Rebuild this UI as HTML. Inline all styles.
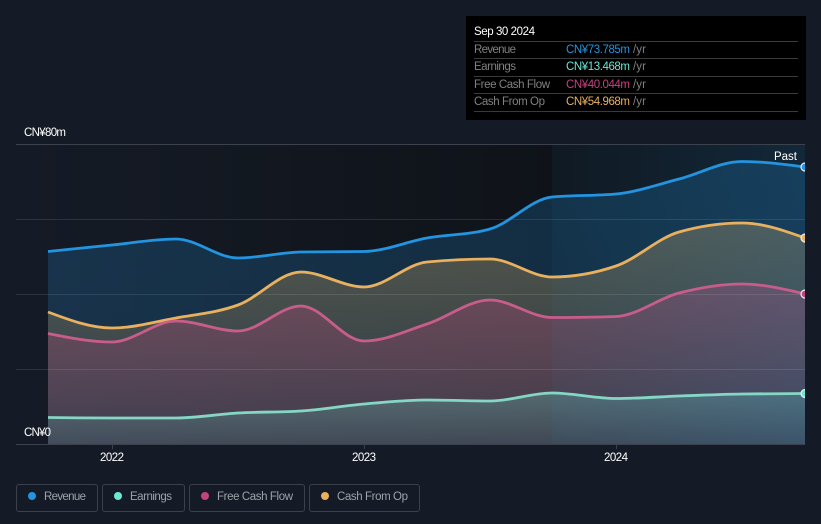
<!DOCTYPE html>
<html>
<head>
<meta charset="utf-8">
<style>
html,body{margin:0;padding:0;background:#151b26;width:821px;height:524px;overflow:hidden}
svg{display:block}
text{font-family:"Liberation Sans","Noto Sans CJK SC",sans-serif;font-size:11.5px}
</style>
</head>
<body>
<svg id="c" width="821" height="524" viewBox="0 0 821 524" xmlns="http://www.w3.org/2000/svg">
<defs>
<linearGradient id="bg" x1="0" y1="0" x2="1" y2="0">
<stop offset="0" stop-color="#151b26"/><stop offset="1" stop-color="#0f1319"/>
</linearGradient>
<linearGradient id="hl" x1="0" y1="0" x2="1" y2="0">
<stop offset="0" stop-color="#2394df" stop-opacity=".05"/><stop offset="1" stop-color="#2394df" stop-opacity=".16"/>
</linearGradient>
<linearGradient id="fr" x1="0" y1="0" x2="0" y2="1">
<stop offset="0" stop-color="#2394df" stop-opacity=".22"/><stop offset="1" stop-color="#2394df" stop-opacity=".18"/>
</linearGradient>
<linearGradient id="fo" x1="0" y1="0" x2="0" y2="1">
<stop offset="0" stop-color="#e9b15f" stop-opacity=".3"/><stop offset="1" stop-color="#e9b15f" stop-opacity=".1"/>
</linearGradient>
<linearGradient id="ff" x1="0" y1="0" x2="0" y2="1">
<stop offset="0" stop-color="#c3427f" stop-opacity=".3"/><stop offset="1" stop-color="#c3427f" stop-opacity=".12"/>
</linearGradient>
<linearGradient id="fe" x1="0" y1="0" x2="0" y2="1">
<stop offset="0" stop-color="#6de6d3" stop-opacity=".25"/><stop offset="1" stop-color="#6de6d3" stop-opacity=".08"/>
</linearGradient>
<clipPath id="cp"><rect x="16" y="144" width="789" height="301"/></clipPath>
</defs>

<rect width="821" height="524" fill="#151b26"/>
<rect x="16" y="144" width="536" height="301" fill="url(#bg)"/>
<rect x="552" y="144" width="253" height="301" fill="#0f1319"/>

<g id="areas"></g>

<rect x="552" y="144" width="253" height="301" fill="url(#hl)"/>

<g stroke="#ffffff" stroke-opacity=".1" stroke-width="1">
<line x1="16" x2="805" y1="219.5" y2="219.5"/>
<line x1="16" x2="805" y1="294.5" y2="294.5"/>
<line x1="16" x2="805" y1="369.5" y2="369.5"/>
</g>
<line x1="16" x2="805" y1="144.5" y2="144.5" stroke="#3b424d"/>
<line x1="16" x2="805" y1="444.5" y2="444.5" stroke="#3b424d"/>
<g stroke="#3b424d">
<line x1="112.5" x2="112.5" y1="445" y2="449"/>
<line x1="364.5" x2="364.5" y1="445" y2="449"/>
<line x1="616.5" x2="616.5" y1="445" y2="449"/>
</g>

<g id="lines" clip-path="url(#cp)" fill="none" stroke-width="2.8" stroke-linejoin="round"></g>

<g clip-path="url(#cp)" stroke="#e8f0f5" stroke-width="1.2">
<circle cx="805" cy="167" r="4" fill="#2394df"/>
<circle cx="805" cy="238" r="4" fill="#e9b15f"/>
<circle cx="805" cy="294" r="4" fill="#c3427f"/>
<circle cx="805" cy="393.5" r="4" fill="#6de6d3"/>
</g>

<g fill="#ffffff">
<text x="24" y="136" textLength="42" lengthAdjust="spacing">CN¥80m</text>
<text x="24" y="436" textLength="27" lengthAdjust="spacing">CN¥0</text>
<text x="774" y="160" textLength="23" lengthAdjust="spacing">Past</text>
<text x="100" y="461" textLength="24" lengthAdjust="spacing">2022</text>
<text x="352" y="461" textLength="24" lengthAdjust="spacing">2023</text>
<text x="604" y="461" textLength="24" lengthAdjust="spacing">2024</text>
</g>

<rect x="466" y="16" width="340" height="104" fill="#000"/>
<text x="474" y="35" fill="#ffffff" textLength="61" lengthAdjust="spacing">Sep 30 2024</text>
<g stroke="#3a3a3a">
<line x1="474" x2="798" y1="41.5" y2="41.5"/>
<line x1="474" x2="798" y1="58.5" y2="58.5"/>
<line x1="474" x2="798" y1="76.5" y2="76.5"/>
<line x1="474" x2="798" y1="93.5" y2="93.5"/>
<line x1="474" x2="798" y1="111.5" y2="111.5"/>
</g>
<g fill="#808080">
<text x="474" y="53" textLength="42" lengthAdjust="spacing">Revenue</text>
<text x="474" y="70" textLength="42" lengthAdjust="spacing">Earnings</text>
<text x="474" y="88" textLength="76" lengthAdjust="spacing">Free Cash Flow</text>
<text x="474" y="105" textLength="71" lengthAdjust="spacing">Cash From Op</text>
<text x="633" y="53" textLength="13" lengthAdjust="spacing">/yr</text>
<text x="633" y="70" textLength="13" lengthAdjust="spacing">/yr</text>
<text x="633" y="88" textLength="13" lengthAdjust="spacing">/yr</text>
<text x="633" y="105" textLength="13" lengthAdjust="spacing">/yr</text>
</g>
<text x="566" y="53" fill="#2394df" textLength="64" lengthAdjust="spacing">CN¥73.785m</text>
<text x="566" y="70" fill="#6de6d3" textLength="64" lengthAdjust="spacing">CN¥13.468m</text>
<text x="566" y="88" fill="#c3427f" textLength="64" lengthAdjust="spacing">CN¥40.044m</text>
<text x="566" y="105" fill="#e9b15f" textLength="64" lengthAdjust="spacing">CN¥54.968m</text>

<g fill="none" stroke="#3b404b">
<rect x="16.5" y="484.5" width="81" height="27" rx="2.5"/>
<rect x="102.5" y="484.5" width="82" height="27" rx="2.5"/>
<rect x="189.5" y="484.5" width="115" height="27" rx="2.5"/>
<rect x="309.5" y="484.5" width="110" height="27" rx="2.5"/>
</g>
<circle cx="32" cy="496" r="4" fill="#2394df"/>
<circle cx="118" cy="496" r="4" fill="#6de6d3"/>
<circle cx="205" cy="496" r="4" fill="#c3427f"/>
<circle cx="325" cy="496" r="4" fill="#e9b15f"/>
<g fill="#9ea2a9">
<text x="44" y="500" textLength="42" lengthAdjust="spacing">Revenue</text>
<text x="130" y="500" textLength="42" lengthAdjust="spacing">Earnings</text>
<text x="217" y="500" textLength="76" lengthAdjust="spacing">Free Cash Flow</text>
<text x="337" y="500" textLength="71" lengthAdjust="spacing">Cash From Op</text>
</g>
</svg>
<script>
var X=[48,112,176,238,301,364,427,490,552,616,679,742,805];
var S=[
{c:"#2394df",f:"fr",y:[251.5,245,239,258,252,251.5,238,229,197,194,179,161.5,167]},
{c:"#e9b15f",f:"fo",y:[312,328,318,305,272,287,262,259,277,266,232,223,238]},
{c:"#c85c8a",f:"ff",y:[333.5,342,321,331,306,341,324,300,317.5,316.5,293,284,294]},
{c:"#85d6c4",f:"fe",y:[417.5,418,418,413,411,404,400,401,393,398.5,396,394,393.5]}
];
function sgn(v){return v<0?-1:1}
function path(y){
  var n=X.length,t=[],s=[],i;
  for(i=0;i<n-1;i++)s[i]=(y[i+1]-y[i])/(X[i+1]-X[i]);
  for(i=1;i<n-1;i++){
    var h0=X[i]-X[i-1],h1=X[i+1]-X[i],p=(s[i-1]*h1+s[i]*h0)/(h0+h1);
    t[i]=(sgn(s[i-1])+sgn(s[i]))*Math.min(Math.abs(s[i-1]),Math.abs(s[i]),.5*Math.abs(p));
  }
  t[0]=(3*s[0]-t[1])/2;t[n-1]=(3*s[n-2]-t[n-2])/2;
  var d="M"+X[0]+" "+y[0];
  for(i=0;i<n-1;i++){
    var dx=(X[i+1]-X[i])/3;
    d+="C"+(X[i]+dx).toFixed(1)+" "+(y[i]+dx*t[i]).toFixed(1)+" "+(X[i+1]-dx).toFixed(1)+" "+(y[i+1]-dx*t[i+1]).toFixed(1)+" "+X[i+1]+" "+y[i+1];
  }
  return d;
}
var NS="http://www.w3.org/2000/svg",A=document.getElementById("areas"),L=document.getElementById("lines");
S.forEach(function(s){
  var d=path(s.y),a=document.createElementNS(NS,"path");
  a.setAttribute("d",d+"L805 444.5L48 444.5Z");a.setAttribute("fill","url(#"+s.f+")");A.appendChild(a);
  var l=document.createElementNS(NS,"path");
  l.setAttribute("d",d);l.setAttribute("stroke",s.c);L.appendChild(l);
});
</script>
</body>
</html>
